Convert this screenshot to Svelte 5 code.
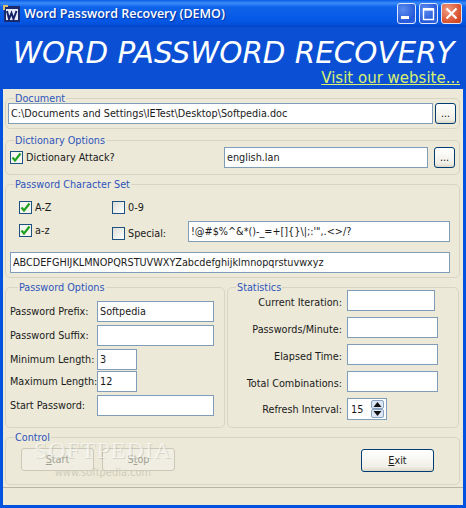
<script>
  const options = [
    { label: 'Password Prefix:', value: 'Softpedia', size: 'long' },
    { label: 'Password Suffix:', value: '', size: 'long' },
    { label: 'Minimum Length:', value: '3', size: 'short' },
    { label: 'Maximum Length:', value: '12', size: 'short' },
    { label: 'Start Password:', value: '', size: 'long' }
  ];
  const stats = ['Passwords/Minute:', 'Elapsed Time:', 'Total Combinations:'];
</script>

<div class="window">
  <header class="titlebar">
    <svg class="appicon" width="17" height="17" viewBox="0 0 17 17">
      <rect x="1" y="1" width="16" height="16" fill="#1c2a6e" />
      <rect x="3" y="4" width="12" height="11" fill="#e8ecf8" />
      <path d="M4 6l2 8 2.500-6 2 6 3-8" fill="none" stroke="#14206a" stroke-width="2" />
      <path d="M0 0h5v2h-3v3h-2z" fill="#d8c070" />
    </svg>
    <span class="apptitle">Word Password Recovery (DEMO)</span>
    <div class="winbtns">
      <div class="winbtn"><svg width="19" height="21" viewBox="0 0 19 21"><rect x="4" y="13" width="8" height="3" fill="#fff" /></svg></div>
      <div class="winbtn"><svg width="19" height="21" viewBox="0 0 19 21"><path d="M4.500 6.500h10v10h-10z" fill="none" stroke="#fff" stroke-width="1.400" /><rect x="4" y="5" width="11" height="2.500" fill="#fff" /></svg></div>
      <div class="winbtn close"><svg width="21" height="21" viewBox="0 0 21 21"><path d="M5.500 5.500l10 10M15.500 5.500l-10 10" stroke="#fff" stroke-width="2.200" /></svg></div>
    </div>
  </header>

  <div class="banner">
    <h1>WORD PASSWORD RECOVERY</h1>
    <a href="#site">Visit our website...</a>
  </div>

  <main>
    <fieldset class="doc">
      <legend>Document</legend>
      <div class="row">
        <input class="docpath" value="C:\Documents and Settings\IETest\Desktop\Softpedia.doc" />
        <button class="dots">...</button>
      </div>
    </fieldset>

    <fieldset class="dict">
      <legend>Dictionary Options</legend>
      <div class="row">
        <label class="check dictcheck"><span class="box on"><svg width="11" height="11" viewBox="0 0 11 11"><path d="M1.500 5.500l2.500 3 5.500-7" fill="none" stroke="#21a121" stroke-width="2.200" /></svg></span>Dictionary Attack?</label>
        <input class="lang" value="english.lan" />
        <button class="dots">...</button>
      </div>
    </fieldset>

    <fieldset class="charset">
      <legend>Password Character Set</legend>
      <div class="sets">
        <div class="col first">
          <label class="check"><span class="box on"><svg width="11" height="11" viewBox="0 0 11 11"><path d="M1.500 5.500l2.500 3 5.500-7" fill="none" stroke="#21a121" stroke-width="2.200" /></svg></span>A-Z</label>
          <label class="check"><span class="box on"><svg width="11" height="11" viewBox="0 0 11 11"><path d="M1.500 5.500l2.500 3 5.500-7" fill="none" stroke="#21a121" stroke-width="2.200" /></svg></span>a-z</label>
        </div>
        <div class="col second">
          <label class="check"><span class="box"></span>0-9</label>
          <label class="check special"><span class="box"></span>Special:</label>
        </div>
        <input class="specials" value={"!@#$%^&*()-_=+[]{}\\|;:'\",.<>/?"} />
      </div>
      <input class="alphabet" value="ABCDEFGHIJKLMNOPQRSTUVWXYZabcdefghijklmnopqrstuvwxyz" />
    </fieldset>

    <div class="pair">
      <fieldset class="opts">
        <legend>Password Options</legend>
        {#each options as o}
          <div class="optrow">
            <span class="optlabel">{o.label}</span>
            <input class={o.size} value={o.value} />
          </div>
        {/each}
      </fieldset>

      <fieldset class="stats">
        <legend>Statistics</legend>
        <div class="statrow">
          <span class="statlabel">Current Iteration:</span>
          <input class="iter" />
        </div>
        {#each stats as s}
          <div class="statrow">
            <span class="statlabel">{s}</span>
            <input class="statval" />
          </div>
        {/each}
        <div class="statrow refresh">
          <span class="statlabel">Refresh Interval:</span>
          <div class="spinner">
            <span>15</span>
            <div class="spin">
              <div><svg width="11" height="7" viewBox="0 0 11 7"><path d="M5.500 1l4 5h-8z" fill="#111" /></svg></div>
              <div><svg width="11" height="7" viewBox="0 0 11 7"><path d="M5.500 6l4-5h-8z" fill="#111" /></svg></div>
            </div>
          </div>
        </div>
      </fieldset>
    </div>

    <fieldset class="control">
      <legend>Control</legend>
      <div class="actions">
        <button class="act" disabled><u>S</u>tart</button>
        <button class="act" disabled>S<u>t</u>op</button>
        <button class="act exit"><u>E</u>xit</button>
      </div>
    </fieldset>

    <div class="watermark" aria-hidden="true">
      <div class="wm-big">SOFTPEDIA</div>
      <div class="wm-small">www.softpedia.com</div>
    </div>
  </main>

  <footer class="status"></footer>
</div>

<style>
  :global(body) {
    margin: 0;
    background: #0a4fd8;
  }

  .window {
    width: 466px;
    height: 508px;
    display: flex;
    flex-direction: column;
    background: #0053e1;
    font-family: "DejaVu Sans Condensed", "DejaVu Sans", sans-serif;
    font-stretch: condensed;
    font-size: 10.750px;
    color: #1a1a1a;
    overflow: hidden;
    white-space: nowrap;
  }

  .titlebar {
    height: 27px;
    flex: none;
    display: flex;
    align-items: center;
    padding: 0 4px 0 3px;
    box-sizing: border-box;
    background: linear-gradient(to bottom, #0a5ae6 0, #3a8cf8 3px, #0f63ea 7px, #0558e6 20px, #0450d8 25px, #033fc0 27px);
  }

  .appicon {
    margin-right: 4px;
  }

  .apptitle {
    color: #fff;
    font-family: "Open Sans", sans-serif;
    font-stretch: normal;
    font-size: 12.500px;
    font-weight: 600;
    text-shadow: 1px 1px 1px #0a2f9a;
  }

  .winbtns {
    margin-left: auto;
    display: flex;
    gap: 3px;
  }

  .winbtn {
    width: 19px;
    height: 21px;
    border: 1px solid #dfe8fb;
    border-radius: 3px;
    box-sizing: border-box;
    background: radial-gradient(circle at 30% 30%, #5c8cf0, #2458d8 70%, #3a6ce8);
    display: flex;
  }

  .winbtn svg {
    margin: -1px;
  }

  .winbtn.close {
    width: 21px;
    background: radial-gradient(circle at 30% 30%, #ee9a80, #d8502c 70%, #c8401c);
  }

  .banner {
    height: 62px;
    flex: none;
    background: #0b50d4;
    color: #fff;
    box-sizing: border-box;
    padding: 9px 6px 0 13px;
    display: flex;
    flex-direction: column;
  }

  h1 {
    margin: 0;
    font-family: "DejaVu Sans", sans-serif;
    font-stretch: normal;
    font-size: 29.400px;
    line-height: 34px;
    font-weight: 400;
    font-style: italic;
  }

  .banner a {
    align-self: flex-end;
    color: #d8f070;
    font-family: "DejaVu Sans", sans-serif;
    font-stretch: normal;
    font-size: 15px;
    line-height: 17px;
  }

  main {
    flex: 1;
    position: relative;
    margin: 0 3px;
    background: #ece9d8;
    padding: 3px 3px 0 2px;
    display: flex;
    flex-direction: column;
  }

  fieldset {
    margin: 0;
    padding: 0;
    min-width: 0;
    box-sizing: border-box;
    border: 1px solid #d8d5c4;
    border-radius: 5px;
  }

  legend {
    margin-left: 8px;
    margin-bottom: -1px;
    padding: 1px 1px 0;
    line-height: 12px;
    color: #2f55bc;
  }

  input {
    height: 21px;
    box-sizing: border-box;
    border: 1px solid #7f9db9;
    background: #fff;
    padding: 0 2px;
    margin: 0;
    font: inherit;
    color: #1a1a1a;
    border-radius: 0;
  }

  .row {
    display: flex;
    align-items: center;
  }

  button {
    font: inherit;
    padding: 0;
    color: #1a1a1a;
    border: 1px solid #003c74;
    border-radius: 3px;
    background: linear-gradient(to bottom, #fff, #f0efe6 80%, #dcd8c8);
  }

  .dots {
    width: 21px;
    height: 21px;
  }

  .doc {
    height: 37px;
  }

  .doc .row {
    margin-top: -1px;
  }

  .docpath {
    width: 425px;
    margin: 0 2px;
  }

  .dict {
    height: 41px;
    margin-top: 5px;
  }

  .dict .row {
    margin-top: 1px;
  }

  .dictcheck {
    width: 214px;
    margin-left: 4px;
    flex: none;
  }

  .lang {
    width: 204px;
    margin-right: 6px;
  }

  .check {
    display: flex;
    align-items: center;
    gap: 3px;
    height: 13px;
  }

  .box {
    width: 13px;
    height: 13px;
    box-sizing: border-box;
    border: 1px solid #1c5180;
    background: linear-gradient(135deg, #dcdcd7, #fff);
    flex: none;
    display: flex;
    align-items: center;
    justify-content: center;
  }

  .box.on {
    background: #f6f6f0;
  }

  .charset {
    height: 100px;
    margin-top: 3px;
  }

  .sets {
    display: flex;
    height: 62px;
  }

  .col {
    display: flex;
    flex-direction: column;
    padding-top: 11px;
    flex: none;
    gap: 10px;
  }

  .first {
    margin-left: 13px;
    width: 93px;
  }

  .second {
    width: 76px;
  }

  .special {
    margin-top: 3px;
  }

  .specials {
    width: 262px;
    margin-top: 31px;
    flex: none;
  }

  .alphabet {
    display: block;
    width: 440px;
    margin-left: 4px;
  }

  .pair {
    display: flex;
    gap: 2px;
    margin-top: 3px;
  }

  .opts {
    width: 220px;
    height: 147px;
    flex: none;
    padding: 8px 0 0 4px;
  }

  .optrow {
    display: flex;
    align-items: center;
    margin-bottom: 3px;
  }

  .optrow:nth-child(4) {
    margin-bottom: 1px;
  }

  .optlabel {
    width: 87px;
    flex: none;
  }

  .long {
    width: 117px;
  }

  .short {
    width: 40px;
  }

  .stats {
    width: 232px;
    height: 147px;
    flex: none;
  }

  .stats legend {
    margin-bottom: -4px;
  }

  .statrow {
    display: flex;
    align-items: center;
    gap: 5px;
    margin-bottom: 6px;
  }

  .statlabel {
    width: 114px;
    padding-top: 3px;
    text-align: right;
    flex: none;
  }

  .refresh .statlabel {
    padding-top: 0;
  }

  .iter {
    width: 88px;
  }

  .statval {
    width: 91px;
  }

  .spinner {
    width: 40px;
    height: 22px;
    box-sizing: border-box;
    border: 1px solid #7f9db9;
    background: #fff;
    display: flex;
    align-items: center;
    justify-content: space-between;
    padding: 0 2px 0 3px;
  }

  .spin {
    display: flex;
    flex-direction: column;
  }

  .spin div {
    width: 13px;
    height: 9px;
    box-sizing: border-box;
    border: 1px solid #8aa4c0;
    border-radius: 2px;
    background: #dde6f4;
    display: flex;
    align-items: center;
    justify-content: center;
  }

  .control {
    height: 54px;
    margin-top: 3px;
  }

  .actions {
    display: flex;
    gap: 8px;
    margin: 5px 0 0 15px;
  }

  .act {
    width: 73px;
    height: 23px;
  }

  .act:disabled {
    border-color: #cbc8b8;
    color: #a1a192;
    background: #f0eee2;
  }

  .exit {
    margin-left: 178px;
    margin-top: 1px;
  }

  .watermark {
    position: absolute;
    left: 20px;
    top: 349px;
    width: 160px;
    text-align: center;
    pointer-events: none;
    color: rgba(255, 255, 255, 0.6);
    text-shadow: 1px 1px 0 rgba(150, 150, 130, 0.3);
  }

  .wm-big {
    font-family: "Liberation Serif", serif;
    font-size: 24px;
    line-height: 24px;
    letter-spacing: 1px;
  }

  .wm-small {
    margin-top: 5px;
    font-size: 11px;
    line-height: 12px;
    color: #d0cdbc;
    text-shadow: none;
  }

  .status {
    height: 21px;
    flex: none;
    box-sizing: border-box;
    margin: 0 3px;
    background: #ece9d8;
    border-top: 1px solid #b8b5a4;
    border-bottom: 3px solid #0053e1;
  }
</style>
